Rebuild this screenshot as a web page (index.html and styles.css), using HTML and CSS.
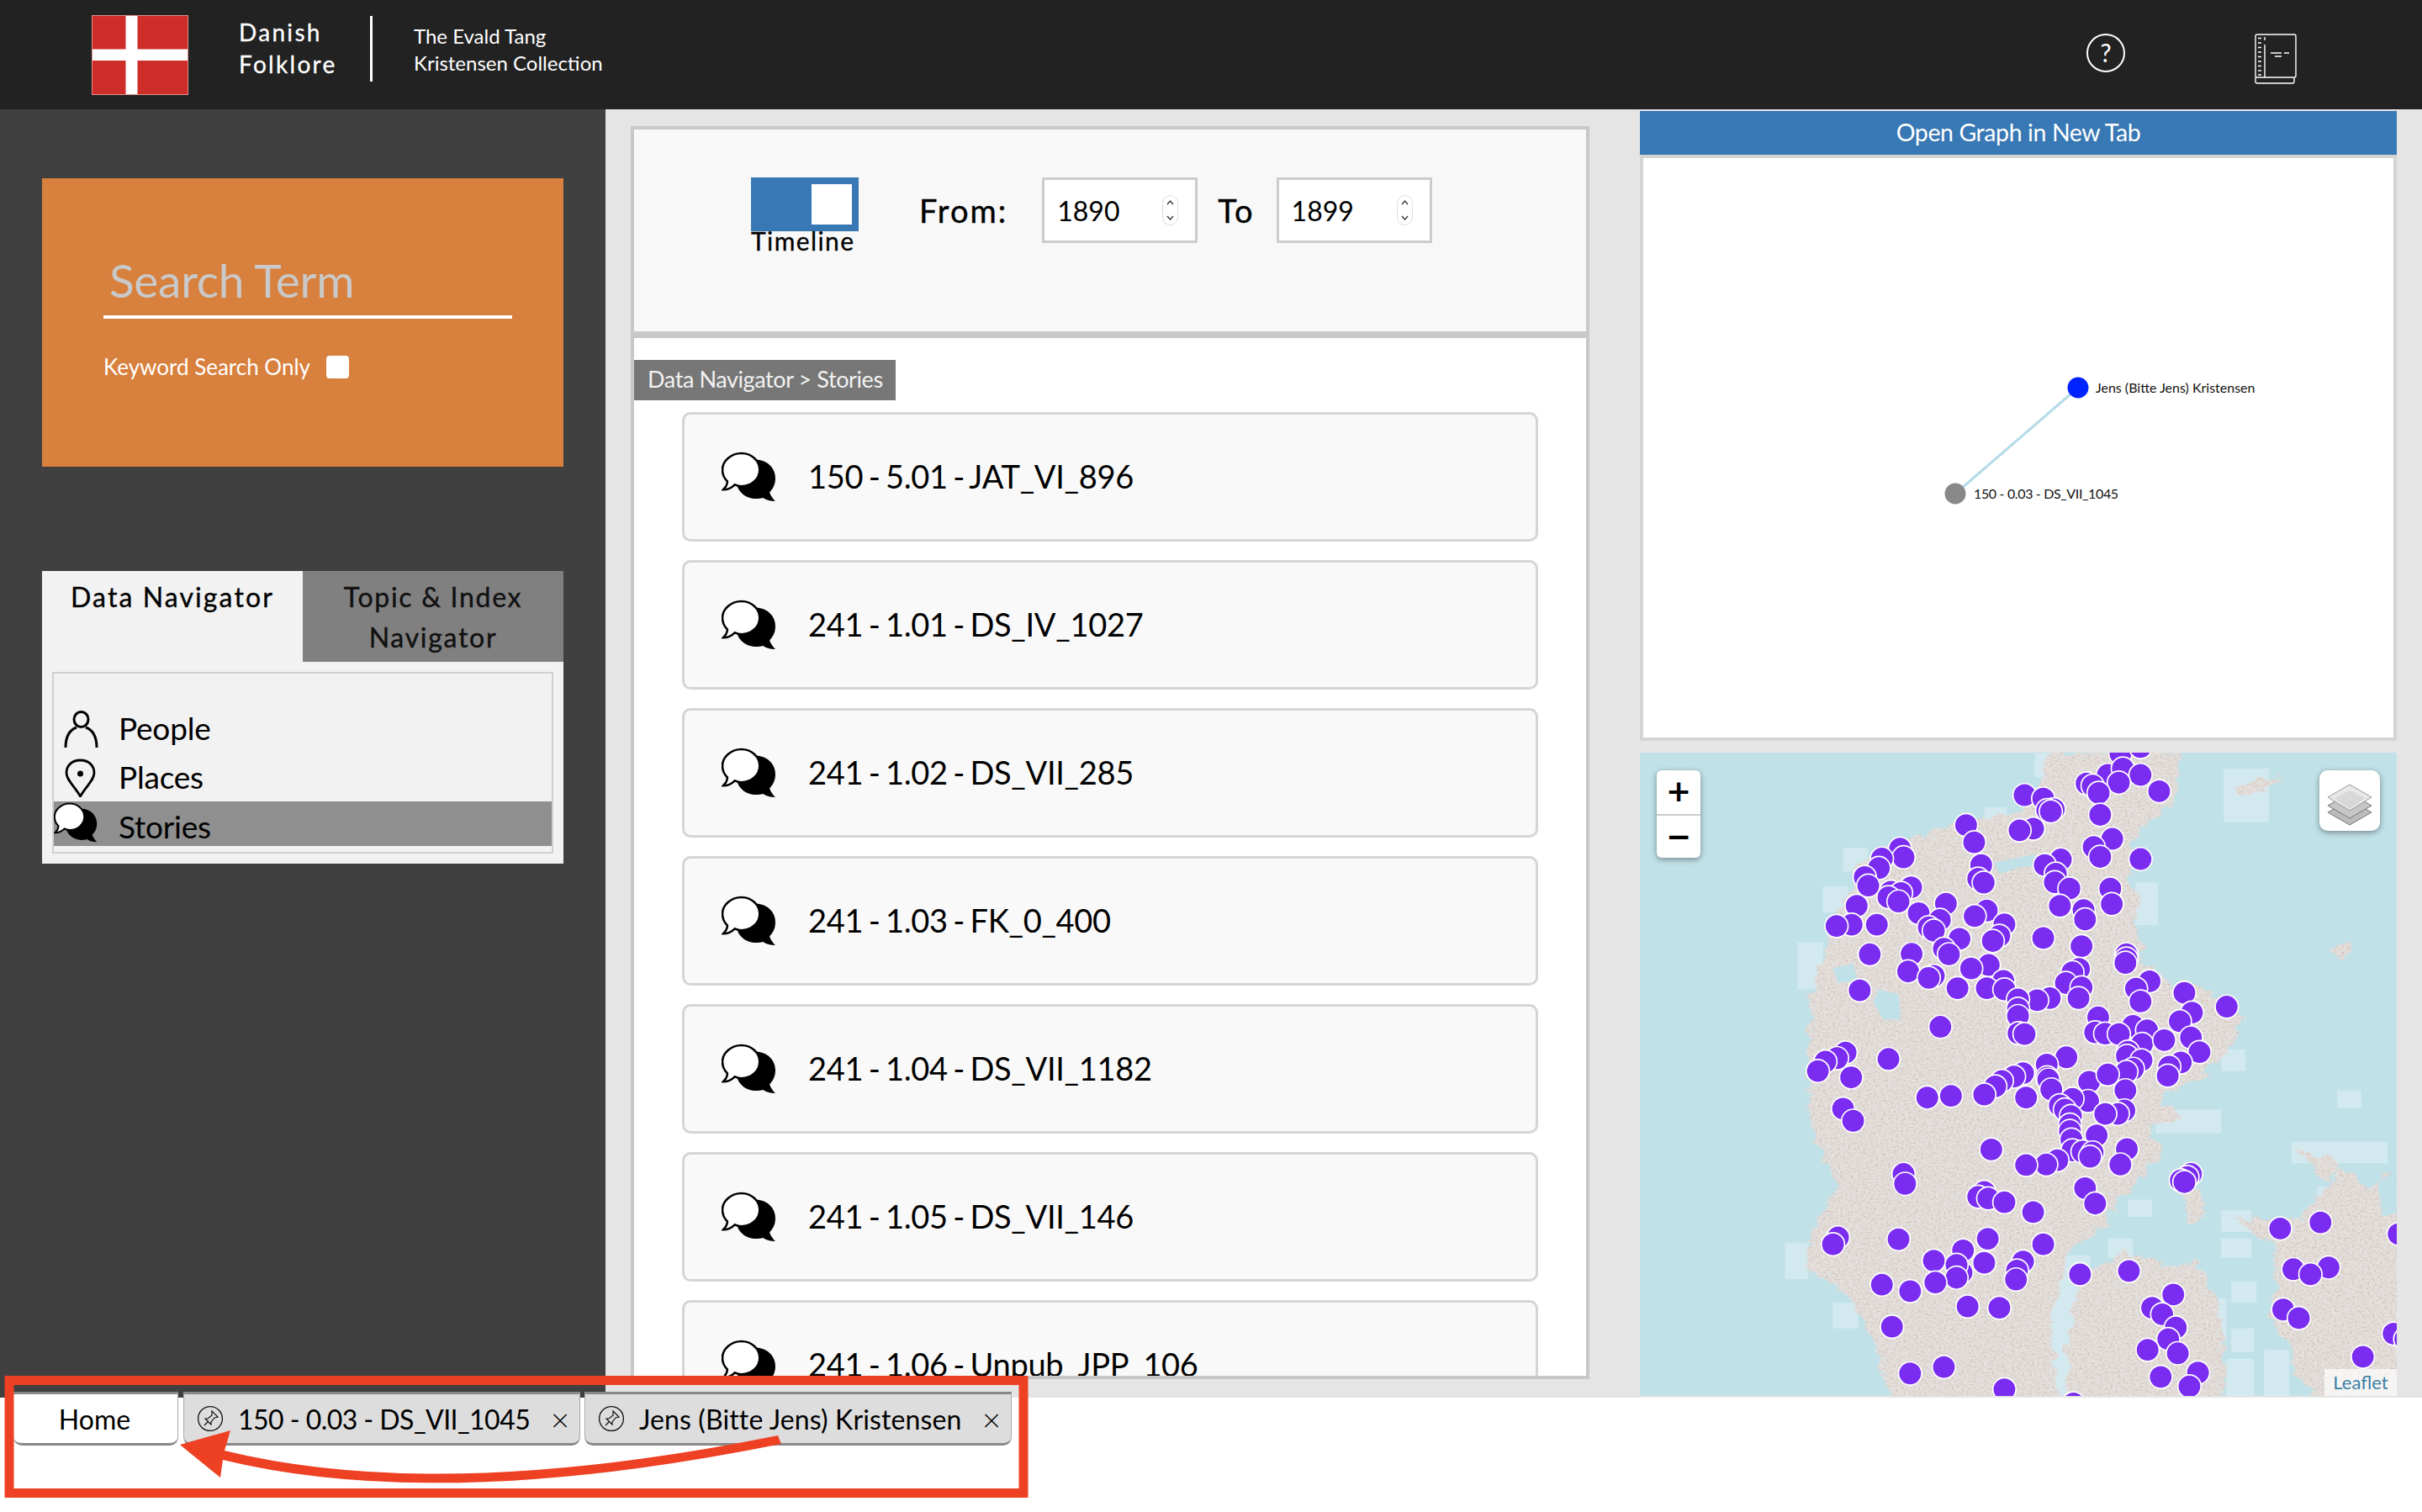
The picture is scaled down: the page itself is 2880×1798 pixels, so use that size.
FILE: index.html
```html
<!DOCTYPE html>
<html lang="en">
<head>
    <meta charset="UTF-8">
    <title>Danish Folklore</title>
    <link rel="stylesheet" href="styles.css">
</head>
<body>
    <svg class="defs" width="0" height="0">
        <symbol id="chat" viewBox="8 5 66 63">
            <path d="M50 16c13 0 23 10 23 22 0 8-3 13-7 17 1 4 4 8 7 11-6 0-11-1-15-4-3 1-5 1-8 1-13 0-24-9-24-22s11-25 24-25z" fill="#000"/>
            <path d="M32 8c12 0 22 9 22 20s-10 20-22 20c-3 0-6-1-8-2-4 4-9 6-14 6 3-3 5-6 5-10-4-4-6-9-6-14C9 17 20 8 32 8z" fill="#fff" stroke="#000" stroke-width="2.6"/>
        </symbol>
        <symbol id="tack" viewBox="0 0 32 32">
            <circle cx="16" cy="16" r="14.4" fill="none" stroke="#111" stroke-width="1.3"/>
            <path d="M18 7l7 7-4 1-4 5 0 3-7-7 3 0 5-4zM14 19l-5 5" fill="none" stroke="#111" stroke-width="1.2"/>
        </symbol>
    </svg>

    <header class="topbar">
        <svg class="flag" viewBox="0 0 115 95">
            <rect width="115" height="95" fill="#cd2e29"/>
            <rect x="40.500" width="14" height="95" fill="#fff"/>
            <rect y="40.500" width="115" height="13.500" fill="#fff"/>
            <rect x=".5" y=".5" width="114" height="94" fill="none" stroke="#e0908c"/>
        </svg>
        <div class="title">Danish<br>Folklore</div>
        <div class="subtitle">The Evald Tang<br>Kristensen Collection</div>
        <div class="help">?</div>
        <svg class="book" viewBox="12 9 50 60" fill="none" stroke="#fff" stroke-width="1.4">
            <path d="M15 10h44a2 2 0 0 1 2 2v47a2 2 0 0 1-2 2H15a2 2 0 0 1-2-2V12a2 2 0 0 1 2-2z"/>
            <path d="M13 61v5a2 2 0 0 0 2 2h42a2 2 0 0 0 2-2v-5M24 13v4M24 22v39"/>
            <path d="M16 14.500h4M16 20h4M16 25.500h4M16 31h4M16 36.500h4M16 42h4M16 47.500h4M16 53h4M16 58h4M31 32h13M47 32h6M36 36h8" stroke-width="1.6"/>
        </svg>
    </header>

    <main class="main">
        <aside class="sidebar">
            <section class="search">
                <div class="search-term">Search Term</div>
                <div class="keyword">Keyword Search Only <span class="check"></span></div>
            </section>
            <section class="nav">
                <div class="nav-tabs">
                    <div class="nav-tab active">Data Navigator</div>
                    <div class="nav-tab">Topic &amp; Index Navigator</div>
                </div>
                <ul class="nav-list">
                    <li>
                        <svg class="nav-icon person" viewBox="0 0 41 44" fill="none" stroke="#000" stroke-width="3"><ellipse cx="20.500" cy="10.500" rx="8.500" ry="9"/><path d="M15 20C7 23 2 31 2 44M26 20c8 3 13 11 13 24"/></svg>
                        People
                    </li>
                    <li>
                        <svg class="nav-icon marker" viewBox="0 0 37 46" fill="none" stroke="#000" stroke-width="2.800"><path d="M18.500 45C12 33 2 26 2 17 2 8 9 2 18.500 2S35 8 35 17c0 9-10 16-16.500 28z"/><circle cx="18.500" cy="18" r="3.500" fill="#000" stroke="none"/></svg>
                        Places
                    </li>
                    <li class="selected">
                        <svg class="nav-icon bubbles"><use href="#chat"/></svg>
                        Stories
                    </li>
                </ul>
            </section>
        </aside>

        <section class="center">
            <div class="filter">
                <div class="toggle-wrap">
                    <div class="toggle"><span class="knob"></span></div>
                    <div class="toggle-label">Timeline</div>
                </div>
                <div class="range-label from">From:</div>
                <div class="year">1890
                    <svg class="spin" viewBox="0 0 19 36"><rect x=".5" y=".5" width="18" height="35" rx="9" fill="#fff" stroke="#ddd"/><path d="M6 11l3.500-4 3.500 4M6 25l3.500 4 3.500-4" fill="none" stroke="#333" stroke-width="1.300"/></svg>
                </div>
                <div class="range-label to">To</div>
                <div class="year">1899
                    <svg class="spin" viewBox="0 0 19 36"><rect x=".5" y=".5" width="18" height="35" rx="9" fill="#fff" stroke="#ddd"/><path d="M6 11l3.500-4 3.500 4M6 25l3.500 4 3.500-4" fill="none" stroke="#333" stroke-width="1.300"/></svg>
                </div>
            </div>
            <div class="results">
                <div class="crumb">Data Navigator &gt; Stories</div>
                <div class="card"><svg class="card-icon"><use href="#chat"/></svg>150 - 5.01 - JAT_VI_896</div>
                <div class="card"><svg class="card-icon"><use href="#chat"/></svg>241 - 1.01 - DS_IV_1027</div>
                <div class="card"><svg class="card-icon"><use href="#chat"/></svg>241 - 1.02 - DS_VII_285</div>
                <div class="card"><svg class="card-icon"><use href="#chat"/></svg>241 - 1.03 - FK_0_400</div>
                <div class="card"><svg class="card-icon"><use href="#chat"/></svg>241 - 1.04 - DS_VII_1182</div>
                <div class="card"><svg class="card-icon"><use href="#chat"/></svg>241 - 1.05 - DS_VII_146</div>
                <div class="card"><svg class="card-icon"><use href="#chat"/></svg>241 - 1.06 - Unpub_JPP_106</div>
            </div>
        </section>

        <section class="right">
            <div class="graph-link">Open Graph in New Tab</div>
            <div class="graph">
                <svg class="graph-canvas" viewBox="0 0 892 689">
                    <line x1="517" y1="273" x2="371" y2="399" stroke="#b4dbe8" stroke-width="3"/>
                    <circle cx="517" cy="273" r="12.500" fill="#0022ff"/>
                    <circle cx="371" cy="399" r="12.500" fill="#888"/>
                    <text x="538" y="279" class="graph-label">Jens (Bitte Jens) Kristensen</text>
                    <text x="393" y="405" class="graph-label tight">150 - 0.03 - DS_VII_1045</text>
                </svg>
            </div>
            <div class="map">
                <svg class="map-canvas" viewBox="0 0 900 766">
                    <defs>
                        <filter id="land" x="-.02" y="-.02" width="1.040" height="1.040">
                            <feTurbulence type="fractalNoise" baseFrequency=".035" numOctaves="3" seed="9" result="warp"/>
                            <feDisplacementMap in="SourceGraphic" in2="warp" scale="38" xChannelSelector="R" yChannelSelector="G" result="shape"/>
                            <feGaussianBlur in="shape" stdDeviation="1.500" result="soft"/>
                            <feTurbulence type="fractalNoise" baseFrequency=".2 .24" numOctaves="3" seed="4"/>
                            <feColorMatrix values="0 0 0 0 .64  0 0 0 0 .5  0 0 0 0 .45  2.200 0 0 0 -.98"/>
                            <feComposite in2="soft" operator="in" result="noise"/>
                            <feMerge><feMergeNode in="soft"/><feMergeNode in="noise"/></feMerge>
                        </filter>
                        <ellipse id="m" rx="23" ry="27" fill="#7a2cf0" stroke="#fff" stroke-width="1.700" vector-effect="non-scaling-stroke"/>
                    </defs>
                    <g transform="scale(.5995 .5102) translate(-17 -28)">
                        <g fill="#d3e9f0">
                            <rect x="1175" y="65" width="90" height="125"/><rect x="380" y="340" width="50" height="60"/>
                            <rect x="420" y="250" width="50" height="55"/><rect x="330" y="470" width="50" height="110"/>
                            <rect x="385" y="510" width="50" height="55"/><rect x="700" y="155" width="45" height="55"/>
                            <rect x="800" y="30" width="50" height="55"/><rect x="1000" y="330" width="45" height="100"/>
                            <rect x="1040" y="860" width="130" height="55"/><rect x="1400" y="815" width="48" height="42"/>
                            <rect x="1080" y="620" width="90" height="50"/><rect x="1170" y="720" width="48" height="50"/>
                            <rect x="305" y="1170" width="45" height="85"/><rect x="985" y="1070" width="48" height="40"/>
                            <rect x="1170" y="1095" width="60" height="50"/><rect x="1170" y="1160" width="60" height="45"/>
                            <rect x="1190" y="1260" width="50" height="50"/><rect x="1125" y="1300" width="55" height="100"/>
                            <rect x="1190" y="1370" width="45" height="55"/><rect x="1310" y="935" width="190" height="50"/>
                            <rect x="400" y="1310" width="50" height="60"/><rect x="945" y="1160" width="50" height="45"/>
                            <rect x="1255" y="1420" width="50" height="110"/><rect x="1180" y="1440" width="55" height="90"/>
                            <rect x="1360" y="1040" width="50" height="50"/><rect x="800" y="1200" width="110" height="340"/>
                        </g>
                        <g fill="#e3e0dd" filter="url(#land)">
                            <path d="M830 28H1090L1080 70 1085 130 1050 170 1015 195 995 240 1005 290 985 330 1010 370 995 440 1015 480 1010 520 1040 530 1070 580 1120 565 1160 600 1215 640 1200 690 1170 740 1130 780 1085 810 1050 830 1090 880 1030 900 1050 960 1010 1020 980 1060 950 1100 940 1130 890 1170 870 1200 855 1250 835 1330 835 1400 850 1560H520L480 1400 440 1300 350 1230 360 1130 410 1040 370 950 350 850 355 700 355 600 380 500 400 430 430 350 450 290 510 240 600 210 660 190 760 170 810 110z"/>
                            <path d="M900 1250 970 1190 1070 1230 1120 1220 1160 1290 1175 1400 1180 1560H870L860 1400 880 1300z"/>
                            <path d="M1194 1113 1272 1176 1278 1268 1266 1358 1306 1411 1316 1476 1383 1560H1560V986L1490 1019 1450 1045 1411 993 1372 1052 1328 1111 1260 1120z"/>
                            <path d="M1090 1040 1135 1045 1135 1120 1105 1130z"/>
                            <path d="M1195 100 1290 85 1250 120 1205 135z"/>
                            <path d="M1390 480 1435 470 1420 500 1400 505z"/>
                            <path d="M1320 950 1410 985 1380 1030 1340 985z"/>
                        </g>
                        <g fill="#c0e1e8">
                            <path d="M490 580 530 590 535 650 500 650 480 610z"/>
                            <path d="M400 530 440 520 450 560 410 565z"/>
                            <path d="M720 285 800 265 820 290 770 295 730 310z"/>
                            <path d="M1480 1030 1518 1000V1100L1490 1110z"/>
                        </g>
                        <use href="#m" x="970" y="30"/><use href="#m" x="1010" y="15"/><use href="#m" x="945" y="80"/><use href="#m" x="975" y="65"/><use href="#m" x="1010" y="80"/><use href="#m" x="903" y="100"/><use href="#m" x="915" y="105"/><use href="#m" x="967" y="98"/><use href="#m" x="927" y="122"/><use href="#m" x="1047" y="118"/>
                        <use href="#m" x="780" y="127"/><use href="#m" x="817" y="135"/><use href="#m" x="838" y="160"/><use href="#m" x="825" y="162"/><use href="#m" x="832" y="165"/><use href="#m" x="930" y="173"/><use href="#m" x="954" y="229"/><use href="#m" x="917" y="248"/><use href="#m" x="930" y="271"/><use href="#m" x="1010" y="276"/>
                        <use href="#m" x="797" y="205"/><use href="#m" x="770" y="209"/><use href="#m" x="664" y="197"/><use href="#m" x="680" y="237"/><use href="#m" x="533" y="252"/><use href="#m" x="540" y="272"/><use href="#m" x="497" y="275"/><use href="#m" x="491" y="297"/><use href="#m" x="463" y="318"/><use href="#m" x="470" y="338"/>
                        <use href="#m" x="694" y="290"/><use href="#m" x="688" y="322"/><use href="#m" x="699" y="331"/><use href="#m" x="852" y="277"/><use href="#m" x="820" y="290"/><use href="#m" x="842" y="310"/><use href="#m" x="840" y="330"/><use href="#m" x="869" y="345"/><use href="#m" x="950" y="345"/><use href="#m" x="953" y="381"/>
                        <use href="#m" x="850" y="385"/><use href="#m" x="897" y="395"/><use href="#m" x="900" y="417"/><use href="#m" x="555" y="342"/><use href="#m" x="515" y="352"/><use href="#m" x="535" y="355"/><use href="#m" x="510" y="365"/><use href="#m" x="530" y="375"/><use href="#m" x="447" y="385"/><use href="#m" x="437" y="429"/>
                        <use href="#m" x="407" y="432"/><use href="#m" x="487" y="429"/><use href="#m" x="624" y="380"/><use href="#m" x="705" y="396"/><use href="#m" x="681" y="409"/><use href="#m" x="570" y="402"/><use href="#m" x="612" y="418"/><use href="#m" x="590" y="435"/><use href="#m" x="600" y="443"/><use href="#m" x="740" y="428"/>
                        <use href="#m" x="730" y="455"/><use href="#m" x="717" y="467"/><use href="#m" x="817" y="460"/><use href="#m" x="893" y="479"/><use href="#m" x="651" y="462"/><use href="#m" x="620" y="485"/><use href="#m" x="630" y="498"/><use href="#m" x="473" y="498"/><use href="#m" x="556" y="497"/><use href="#m" x="600" y="548"/>
                        <use href="#m" x="549" y="538"/><use href="#m" x="590" y="553"/><use href="#m" x="709" y="523"/><use href="#m" x="674" y="531"/><use href="#m" x="982" y="498"/><use href="#m" x="982" y="508"/><use href="#m" x="980" y="518"/><use href="#m" x="888" y="532"/><use href="#m" x="875" y="540"/><use href="#m" x="1028" y="561"/>
                        <use href="#m" x="1001" y="578"/><use href="#m" x="1010" y="608"/><use href="#m" x="738" y="560"/><use href="#m" x="705" y="577"/><use href="#m" x="647" y="577"/><use href="#m" x="740" y="580"/><use href="#m" x="862" y="565"/><use href="#m" x="893" y="575"/><use href="#m" x="887" y="600"/><use href="#m" x="453" y="582"/>
                        <use href="#m" x="830" y="600"/><use href="#m" x="805" y="605"/><use href="#m" x="767" y="603"/><use href="#m" x="767" y="625"/><use href="#m" x="767" y="642"/><use href="#m" x="1097" y="588"/><use href="#m" x="1112" y="634"/><use href="#m" x="1181" y="620"/><use href="#m" x="1088" y="654"/><use href="#m" x="926" y="645"/>
                        <use href="#m" x="613" y="667"/><use href="#m" x="768" y="682"/><use href="#m" x="780" y="684"/><use href="#m" x="920" y="680"/><use href="#m" x="940" y="683"/><use href="#m" x="995" y="665"/><use href="#m" x="1023" y="675"/><use href="#m" x="967" y="684"/><use href="#m" x="1013" y="707"/><use href="#m" x="1057" y="698"/>
                        <use href="#m" x="1110" y="692"/><use href="#m" x="1127" y="726"/><use href="#m" x="985" y="725"/><use href="#m" x="983" y="735"/><use href="#m" x="1012" y="745"/><use href="#m" x="1090" y="750"/><use href="#m" x="1067" y="760"/><use href="#m" x="1064" y="781"/><use href="#m" x="425" y="727"/><use href="#m" x="408" y="740"/>
                        <use href="#m" x="385" y="748"/><use href="#m" x="370" y="770"/><use href="#m" x="436" y="785"/><use href="#m" x="510" y="742"/><use href="#m" x="863" y="738"/><use href="#m" x="824" y="755"/><use href="#m" x="777" y="775"/><use href="#m" x="759" y="783"/><use href="#m" x="735" y="793"/><use href="#m" x="722" y="806"/>
                        <use href="#m" x="700" y="825"/><use href="#m" x="587" y="832"/><use href="#m" x="634" y="828"/><use href="#m" x="783" y="832"/><use href="#m" x="825" y="785"/><use href="#m" x="827" y="790"/><use href="#m" x="833" y="813"/><use href="#m" x="908" y="795"/><use href="#m" x="995" y="765"/><use href="#m" x="982" y="772"/>
                        <use href="#m" x="945" y="778"/><use href="#m" x="980" y="815"/><use href="#m" x="420" y="858"/><use href="#m" x="440" y="886"/><use href="#m" x="906" y="840"/><use href="#m" x="875" y="835"/><use href="#m" x="850" y="850"/><use href="#m" x="860" y="860"/><use href="#m" x="978" y="862"/><use href="#m" x="965" y="870"/>
                        <use href="#m" x="940" y="870"/><use href="#m" x="872" y="875"/><use href="#m" x="870" y="895"/><use href="#m" x="870" y="910"/><use href="#m" x="923" y="920"/><use href="#m" x="873" y="930"/><use href="#m" x="875" y="955"/><use href="#m" x="895" y="958"/><use href="#m" x="915" y="960"/><use href="#m" x="910" y="970"/>
                        <use href="#m" x="983" y="952"/><use href="#m" x="970" y="988"/><use href="#m" x="714" y="953"/><use href="#m" x="845" y="978"/><use href="#m" x="823" y="988"/><use href="#m" x="783" y="989"/><use href="#m" x="540" y="1010"/><use href="#m" x="543" y="1033"/><use href="#m" x="1110" y="1010"/><use href="#m" x="1103" y="1017"/>
                        <use href="#m" x="1090" y="1025"/><use href="#m" x="1097" y="1029"/><use href="#m" x="700" y="1052"/><use href="#m" x="688" y="1063"/><use href="#m" x="708" y="1067"/><use href="#m" x="740" y="1076"/><use href="#m" x="900" y="1043"/><use href="#m" x="920" y="1079"/><use href="#m" x="797" y="1099"/><use href="#m" x="410" y="1158"/>
                        <use href="#m" x="400" y="1174"/><use href="#m" x="530" y="1162"/><use href="#m" x="707" y="1161"/><use href="#m" x="817" y="1174"/><use href="#m" x="658" y="1188"/><use href="#m" x="600" y="1212"/><use href="#m" x="655" y="1240"/><use href="#m" x="645" y="1222"/><use href="#m" x="645" y="1252"/><use href="#m" x="700" y="1217"/>
                        <use href="#m" x="777" y="1214"/><use href="#m" x="765" y="1235"/><use href="#m" x="763" y="1256"/><use href="#m" x="603" y="1263"/><use href="#m" x="497" y="1268"/><use href="#m" x="553" y="1283"/><use href="#m" x="890" y="1244"/><use href="#m" x="987" y="1236"/><use href="#m" x="1075" y="1291"/><use href="#m" x="1033" y="1322"/>
                        <use href="#m" x="1053" y="1337"/><use href="#m" x="1080" y="1368"/><use href="#m" x="1065" y="1395"/><use href="#m" x="1024" y="1420"/><use href="#m" x="1084" y="1428"/><use href="#m" x="667" y="1319"/><use href="#m" x="730" y="1322"/><use href="#m" x="517" y="1366"/><use href="#m" x="553" y="1475"/><use href="#m" x="620" y="1460"/>
                        <use href="#m" x="1050" y="1483"/><use href="#m" x="1124" y="1473"/><use href="#m" x="1107" y="1505"/><use href="#m" x="740" y="1512"/><use href="#m" x="877" y="1545"/><use href="#m" x="1287" y="1137"/><use href="#m" x="1367" y="1123"/><use href="#m" x="1522" y="1150"/><use href="#m" x="1383" y="1228"/><use href="#m" x="1313" y="1232"/>
                        <use href="#m" x="1347" y="1244"/><use href="#m" x="1293" y="1326"/><use href="#m" x="1324" y="1346"/><use href="#m" x="1512" y="1382"/><use href="#m" x="1535" y="1395"/><use href="#m" x="1451" y="1436"/>
                    </g>
                </svg>
                <div class="zoom-control">
                    <div class="zoom-btn">+</div>
                    <div class="zoom-btn">&minus;</div>
                </div>
                <div class="layers">
                    <svg viewBox="0 0 72 72" width="72" height="72">
                        <path d="M36 35 62 50 36 65 10 50z" fill="#bbb" stroke="#777" stroke-width="1"/>
                        <path d="M36 27 62 42 36 57 10 42z" fill="#c6c6c6" stroke="#777" stroke-width="1"/>
                        <path d="M36 17 62 32 36 48 10 32z" fill="#e8e8e8" stroke="#999" stroke-width="1"/>
                        <path d="M36 24 54 33 36 46 18 33z" fill="#d8d8d8"/>
                    </svg>
                </div>
                <div class="attribution">Leaflet</div>
            </div>
        </section>
    </main>

    <nav class="tabstrip">
        <div class="tab home">Home</div>
        <div class="tab story"><svg class="tack"><use href="#tack"/></svg><span class="tab-text">150 - 0.03 - DS_VII_1045</span><span class="close">&times;</span></div>
        <div class="tab person-tab"><svg class="tack"><use href="#tack"/></svg><span class="tab-name">Jens (Bitte Jens) Kristensen</span><span class="close">&times;</span></div>
    </nav>

    <!-- red callout drawn on top of the tabs -->
    <svg class="callout" viewBox="0 1636 1230 150">
        <rect x="11" y="1641.500" width="1206" height="134" fill="none" stroke="#ee4023" stroke-width="11"/>
        <path d="M214 1718 274 1701 267 1725Q524 1788 925 1707L929 1717Q523 1799 265 1736L262 1757z" fill="#ee4023"/>
    </svg>
</body>
</html>
```

FILE: styles.css
```css
* {
    box-sizing: border-box;
}

body {
    font-family: Lato, "Open Sans", sans-serif;
    background-color: #ffffff;
    color: #000;
    margin: 0;
    padding: 0;
    height: 1798px;
    overflow: hidden;
    position: relative;
}

.defs {
    position: absolute;
}

/* top bar */
.topbar {
    height: 130px;
    background-color: #222222;
    color: #fff;
    display: flex;
    align-items: flex-start;
    padding: 18px 149px 0 109px;
}

.flag {
    width: 115px;
    height: 95px;
    flex: none;
}

.title {
    margin-left: 60px;
    width: 159px;
    height: 78px;
    margin-top: 1px;
    border-right: 3px solid #fff;
    font-size: 28px;
    letter-spacing: 2.300px;
    line-height: 38px;
    -webkit-text-stroke: 0.3px #fff;
}

.subtitle {
    margin-left: 49px;
    margin-top: 9px;
    font-size: 24px;
    line-height: 32px;
}

.help {
    margin-left: auto;
    margin-top: 22px;
    width: 46px;
    height: 46px;
    border: 2px solid #fff;
    border-radius: 50%;
    font-size: 30px;
    line-height: 40px;
    text-align: center;
}

.book {
    margin-left: 154px;
    margin-top: 22px;
    width: 50px;
    height: 60px;
}

/* page body */
.main {
    height: 1532px;
    background-color: #e5e5e5;
    display: flex;
    align-items: flex-start;
}

.sidebar {
    width: 720px;
    height: 100%;
    background-color: #404040;
    padding: 82px 50px 0;
    flex: none;
}

.search {
    height: 343px;
    background-color: #d8803d;
    padding: 90px 61px 0 73px;
    color: #fff;
}

.search-term {
    height: 73px;
    box-sizing: content-box;
    border-bottom: 4px solid #fff;
    padding-left: 7px;
    font-size: 55px;
    letter-spacing: -0.300px;
    line-height: 62px;
    color: #c9c9c9;
}

.keyword {
    margin-top: 42px;
    display: flex;
    align-items: center;
    font-size: 26px;
    line-height: 30px;
    white-space: pre;
}

.check {
    width: 27px;
    height: 27px;
    margin-left: 13px;
    background-color: #fff;
    border-radius: 4px;
}

.nav {
    margin-top: 124px;
    height: 348px;
    background-color: #f2f2f2;
}

.nav-tabs {
    display: flex;
    height: 108px;
}

.nav-tab {
    width: 50%;
    padding: 7px 40px 0;
    text-align: center;
    font-size: 32px;
    letter-spacing: 1.700px;
    line-height: 48px;
    background-color: #808080;
    color: #111;
    -webkit-text-stroke: 0.4px #111;
}

.nav-tab.active {
    background-color: #f2f2f2;
    color: #000;
    letter-spacing: 2.100px;
    padding: 7px 0 0;
}

.nav-list {
    list-style: none;
    margin: 12px;
    padding: 35px 0 0;
    height: 216px;
    border: 2px solid #d0d0d0;
    font-size: 37px;
    letter-spacing: -0.200px;
}

.nav-list li {
    display: flex;
    align-items: center;
    height: 58px;
    position: relative;
    padding-left: 77px;
    color: #000;
}

.nav-list li.selected {
    height: 53px;
    margin-top: 1px;
    padding-top: 6px;
    background-color: #8f8f8f;
}

.nav-icon {
    position: absolute;
    display: block;
}

.person {
    left: 12px;
    top: 9px;
    width: 41px;
    height: 44px;
}

.marker {
    left: 13px;
    top: 8px;
    width: 37px;
    height: 46px;
}

.bubbles {
    left: 0;
    top: 0;
    width: 52px;
    height: 50px;
}

/* middle column */
.center {
    width: 1140px;
    height: 1490px;
    margin: 20px 0 0 30px;
    flex: none;
    border: 4px solid #c8c8c8;
    background-color: #fff;
    overflow: hidden;
}

.filter {
    height: 248px;
    background-color: #f8f8f8;
    border-bottom: 8px solid #c8c8c8;
    padding: 57px 0 0 139px;
    display: flex;
    align-items: flex-start;
}

.toggle-wrap {
    width: 128px;
}

.toggle {
    height: 64px;
    background-color: #3878b4;
    padding: 8px;
    display: flex;
    justify-content: flex-end;
}

.knob {
    width: 48px;
    height: 48px;
    background-color: #fff;
}

.toggle-label {
    font-size: 30px;
    letter-spacing: 1.400px;
    line-height: 22px;
    -webkit-text-stroke: 0.3px #000;
}

.range-label {
    font-size: 38px;
    line-height: 78px;
    letter-spacing: 2px;
    -webkit-text-stroke: 0.4px #000;
}

.from {
    margin: 0 41px 0 72px;
}

.to {
    margin: 0 26px 0 24px;
}

.year {
    width: 185px;
    height: 78px;
    border: 3px solid #ccc;
    background-color: #fff;
    padding: 0 20px 0 15px;
    font-size: 32px;
    display: flex;
    align-items: center;
    justify-content: space-between;
}

.spin {
    width: 19px;
    height: 36px;
}

.results {
    padding-top: 26px;
}

.crumb {
    width: 311px;
    height: 48px;
    background-color: #777777;
    color: #f2f2f2;
    font-size: 27px;
    letter-spacing: -0.400px;
    line-height: 46px;
    padding-left: 16px;
}

.card {
    width: 1018px;
    height: 154px;
    margin: 14px 0 22px 57px;
    background-color: #f9f9f9;
    border: 3px solid #d5d5d5;
    border-radius: 10px;
    display: flex;
    align-items: center;
    font-size: 38px;
    letter-spacing: -0.300px;
    word-spacing: -3px;
    line-height: 44px;
    padding: 0 0 3px 44px;
    color: #000;
}

.card + .card {
    margin-top: 0;
}

.card-icon {
    width: 65px;
    height: 62px;
    margin: 3px 38px 0 0;
}

/* right column */
.right {
    width: 900px;
    margin: 2px 0 0 60px;
    flex: none;
}

.graph-link {
    height: 52px;
    background-color: #3878b4;
    color: #fff;
    text-align: center;
    font-size: 28.500px;
    letter-spacing: -0.400px;
    line-height: 50px;
}

.graph {
    height: 697px;
    border: 4px solid #d4d4d4;
    background-color: #fff;
}

.graph-canvas {
    display: block;
    width: 892px;
    height: 689px;
}

.graph-label {
    font-size: 16px;
    fill: #111;
}

.graph-label.tight {
    letter-spacing: -0.350px;
}

.map {
    position: relative;
    height: 765px;
    margin-top: 14px;
    background-color: #c0e1e8;
    overflow: hidden;
}

.map-canvas {
    display: block;
    width: 900px;
    height: 766px;
}

.zoom-control {
    position: absolute;
    left: 20px;
    top: 21px;
    width: 52px;
    height: 104px;
    background-color: #fff;
    border-radius: 6px;
    box-shadow: 0 2px 7px rgba(0, 0, 0, 0.4);
}

.zoom-btn {
    height: 52px;
    text-align: center;
    font-family: "DejaVu Sans", sans-serif;
    font-size: 36px;
    font-weight: 700;
    line-height: 50px;
}

.zoom-btn + .zoom-btn {
    border-top: 2px solid #ccc;
}

.layers {
    position: absolute;
    left: 808px;
    top: 21px;
    width: 72px;
    height: 72px;
    background-color: #fff;
    border-radius: 10px;
    box-shadow: 0 2px 7px rgba(0, 0, 0, 0.4);
}

.attribution {
    position: absolute;
    right: 0;
    bottom: 0;
    width: 86px;
    height: 32px;
    background-color: rgba(255, 255, 255, 0.7);
    color: #3b7fa6;
    font-size: 22px;
    line-height: 32px;
    text-align: center;
}

/* open tabs along the bottom */
.tabstrip {
    position: relative;
    margin-top: -7px;
    padding-left: 16px;
    display: flex;
    gap: 5px;
    height: 64px;
    font-size: 32px;
    color: #000;
}

.tab {
    height: 64px;
    display: flex;
    align-items: center;
    background-color: #dddddd;
    border: 1px solid #aaa;
    border-top: 3px solid #888;
    border-bottom: 3px solid #888;
    border-radius: 0 0 10px 10px;
    padding-left: 15px;
}

.tab.home {
    width: 196px;
    background-color: #fff;
    justify-content: center;
    padding: 0 2px 0 0;
    border-left: 0;
}

.tab.story {
    width: 472px;
    margin-left: 1px;
}

.tab.person-tab {
    width: 508px;
}

.tab-text {
    letter-spacing: -0.550px;
}

.tab-name {
    letter-spacing: 0.120px;
}

.tack {
    width: 32px;
    height: 32px;
    margin-right: 17px;
    flex: none;
}

.close {
    margin-left: auto;
    margin-right: 12px;
    font-size: 38px;
    font-weight: 300;
}

.callout {
    position: absolute;
    left: 0;
    top: 1636px;
    width: 1230px;
    height: 150px;
    pointer-events: none;
}
```
